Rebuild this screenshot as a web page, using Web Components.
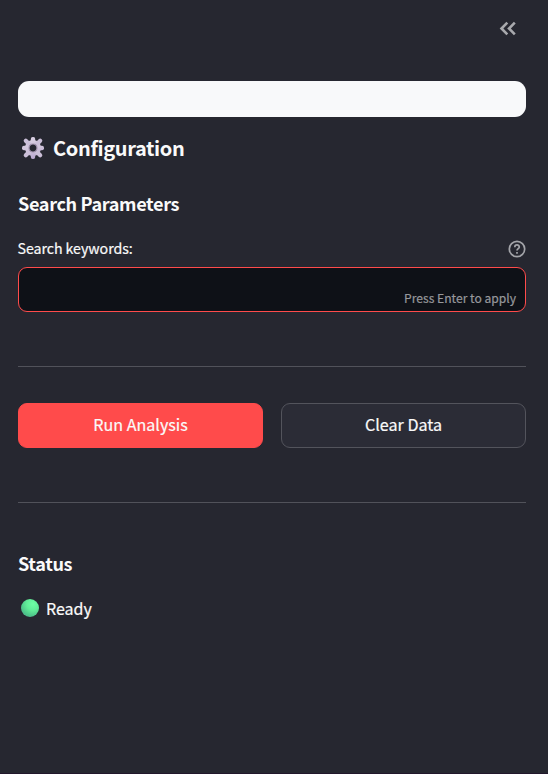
<!DOCTYPE html>
<html lang="en">
<head>
<meta charset="utf-8">
<title>Configuration</title>
<style>
html,body{margin:0;height:100%;background:#262730;overflow:hidden}
body{font-family:"Noto Sans CJK SC","Noto Sans",sans-serif;color:#fafafa;-webkit-text-stroke:.2px currentColor}
</style>
</head>
<body>
<config-sidebar></config-sidebar>
<script>
const define=(name,css,html)=>customElements.define(name,class extends HTMLElement{
  constructor(){
    super();
    const t=document.createElement('template');
    t.innerHTML=`<style>*{box-sizing:border-box}${css}</style>${html}`;
    this.attachShadow({mode:'open'}).append(t.content.cloneNode(true));
  }
});
define('collapse-button',`:host{display:flex;justify-content:flex-end;height:81px;padding:20px 31px 0 0}svg{display:block}`,
`<svg width="18" height="18" viewBox="0 0 18 18" fill="none" stroke="#a8a9ad" stroke-width="2.6"><path d="M8.3 2.7 2.5 8.5 8.3 14.3M15.8 2.7 10 8.5 15.8 14.3"/></svg>`);
define('blank-banner',`:host{display:block;height:36px;border-radius:11px;background:#f8f9fa}`,``);
define('gear-icon',`:host{display:block;width:24px;height:24px}svg{display:block}`,
`<svg width="24" height="24" viewBox="-12 -12 24 24"><defs><linearGradient id="g" gradientUnits="userSpaceOnUse" x1="-3" y1="-11" x2="3" y2="11"><stop stop-color="#d9cfe2"/><stop offset=".55" stop-color="#cfc3da"/><stop offset="1" stop-color="#b7a5d0"/></linearGradient></defs>
<g fill="url(#g)"><circle r="8"/><rect x="-2.2" y="-11" width="4.4" height="22" rx="1.9"/><rect x="-11" y="-2.2" width="22" height="4.4" rx="1.9"/><path d="M-7.2-7.2 7.2 7.2M7.2-7.2-7.2 7.2" stroke="#cbbfd8" stroke-width="4.2" stroke-linecap="round"/></g><circle r="4" fill="#262730" stroke="#a495b0" stroke-width="1.2"/></svg>`);
define('section-title',`:host{display:flex;align-items:center;height:30px;font-size:18.1px;line-height:30px;font-weight:600;letter-spacing:-.37px;white-space:nowrap;-webkit-text-stroke:0}:host([large]){font-size:20px;letter-spacing:-.36px}::slotted(gear-icon){margin:0 8px 0 3px}`,`<slot></slot>`);
define('help-icon',`:host{display:block}svg{display:block}`,
`<svg width="18" height="18" viewBox="0 0 18 18" fill="none" stroke="#a3a4a9" stroke-width="1.7"><circle cx="9" cy="9" r="7.7"/><path d="M6.8 7.2C6.8 4.2 11.3 4.3 11.3 7C11.3 8.7 9 8.7 9 10.6"/><path d="M9 12v1.7"/></svg>`);
define('keyword-field',`:host{display:block}.label{display:flex;justify-content:space-between;align-items:center;height:22px;font-size:14.2px;line-height:22px;letter-spacing:-.05px}.label>span{margin:-2px 0 0 -.5px}.box{display:flex;justify-content:flex-end;align-items:flex-end;margin-top:7px;height:45px;border:1px solid #ff4b4b;border-radius:9px;background:#0e1117;padding:0 9px 4px;font-size:12.1px;line-height:18px;color:#97989c}`,
`<div class="label"><span><slot></slot></span><help-icon></help-icon></div><div class="box"><span><slot name="hint"></slot></span></div>`);
define('rule-line',`:host{display:block;height:1px;background:#51525a}`,``);
define('action-button',`:host{display:flex;flex:1;align-items:center;justify-content:center;height:45px;border:1px solid #53545c;border-radius:9px;background:#2b2c36;font-size:16.1px;line-height:28px;padding-bottom:3px;box-sizing:border-box}:host([primary]){background:#ff4b4b;border-color:#ff4b4b}`,`<span><slot></slot></span>`);
define('button-row',`:host{display:flex;gap:18px}`,`<slot></slot>`);
define('status-line',`:host{display:flex;align-items:center;height:28px;font-size:16px;line-height:28px}i{width:18px;height:18px;margin:0 7px 0 3px;border-radius:50%;background:radial-gradient(circle at 66% 28%,#6dffa5 0,#61ed98 35%,#4fc88b 65%,#4c9c86 100%)}`,`<i></i><span><slot></slot></span>`);
define('config-sidebar',`:host{display:flex;flex-direction:column;height:774px;padding:0 22px 0 18px;border-bottom:1px solid #21172b;box-sizing:border-box;background:#262730}
collapse-button{margin-right:-22px}.title{margin-top:16px}.params{margin-top:25px}keyword-field{margin-top:20px}.r1{margin-top:54px}button-row{margin-top:36px}.r2{margin-top:54px}.st{margin-top:45px}status-line{margin-top:16px}`,
`<collapse-button></collapse-button><blank-banner></blank-banner>
<section-title class="title" large><gear-icon></gear-icon><span>Configuration</span></section-title>
<section-title class="params"><span>Search Parameters</span></section-title>
<keyword-field>Search keywords:<span slot="hint">Press Enter to apply</span></keyword-field>
<rule-line class="r1"></rule-line>
<button-row><action-button primary>Run Analysis</action-button><action-button>Clear Data</action-button></button-row>
<rule-line class="r2"></rule-line>
<section-title class="st"><span>Status</span></section-title>
<status-line>Ready</status-line>`);
</script>
</body>
</html>
